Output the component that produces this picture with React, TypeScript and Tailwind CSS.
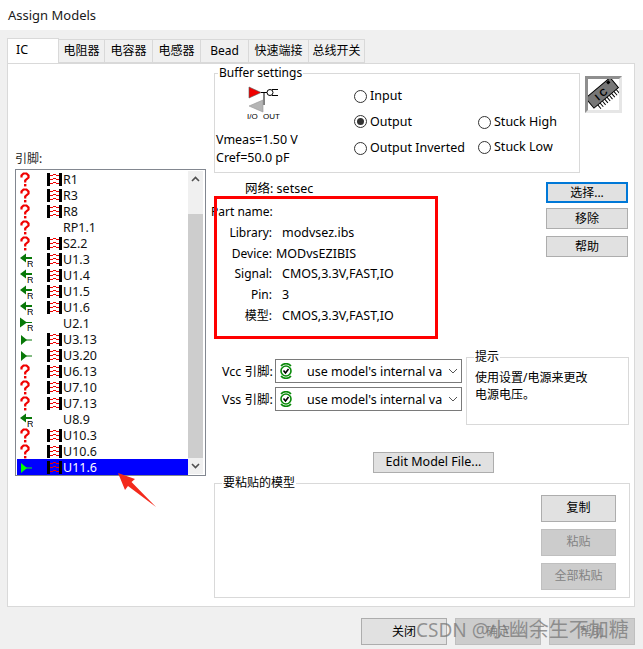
import React from "react";

type PinIcon = "question" | "inputR" | "outputR" | "output";

const pins: { name: string; icon: PinIcon; model: boolean }[] = [
  { name: "R1", icon: "question", model: true },
  { name: "R3", icon: "question", model: true },
  { name: "R8", icon: "question", model: true },
  { name: "RP1.1", icon: "question", model: false },
  { name: "S2.2", icon: "question", model: true },
  { name: "U1.3", icon: "inputR", model: true },
  { name: "U1.4", icon: "inputR", model: true },
  { name: "U1.5", icon: "inputR", model: true },
  { name: "U1.6", icon: "inputR", model: true },
  { name: "U2.1", icon: "outputR", model: false },
  { name: "U3.13", icon: "output", model: true },
  { name: "U3.20", icon: "output", model: true },
  { name: "U6.13", icon: "question", model: true },
  { name: "U7.10", icon: "question", model: true },
  { name: "U7.13", icon: "question", model: true },
  { name: "U8.9", icon: "inputR", model: false },
  { name: "U10.3", icon: "question", model: true },
  { name: "U10.6", icon: "question", model: true },
  { name: "U11.6", icon: "output", model: true },
];

const tabs = ["电阻器", "电容器", "电感器", "Bead", "快速端接", "总线开关"];
const tabWidths = ["w-[47px]", "w-[49px]", "w-[49px]", "w-[49px]", "w-[61px]", "w-[57px]"];

const details = [
  { label: "Library:", value: "modvsez.ibs" },
  { label: "Device:", value: "MODvsEZIBIS", shift: true },
  { label: "Signal:", value: "CMOS,3.3V,FAST,IO" },
  { label: "Pin:", value: "3" },
  { label: "模型:", value: "CMOS,3.3V,FAST,IO" },
];

const StatusIcon = ({ icon, selected }: { icon: PinIcon; selected: boolean }) => {
  const green = selected ? "#00ff00" : "#087808";
  if (icon === "question") {
    return (
      <svg width="14" height="16" viewBox="0 0 14 16">
        <path d="M2.5 5.5 V3.5 L4.5 1.5 H7.5 L9.5 3.5 V5.5 L6.2 8.5 V10.5" fill="none" stroke="#f00000" strokeWidth="2.2" />
        <rect x="5" y="12" width="2.4" height="2.4" fill="#f00000" />
      </svg>
    );
  }
  if (icon === "output") {
    return (
      <svg width="14" height="16" viewBox="0 0 14 16">
        <path d="M2 3 L8 8 L2 13 Z" fill={green} />
        <path d="M7 8 H13" stroke={green} strokeWidth="1" />
      </svg>
    );
  }
  if (icon === "outputR") {
    return (
      <svg width="14" height="16" viewBox="0 0 14 16">
        <path d="M1 1.5 L8 6.5 L1 11.5 Z" fill={green} />
        <path d="M7 6.5 H13" stroke={green} strokeWidth="1" />
        <text x="8" y="15" fontSize="9" fill="#000" fontFamily="Liberation Sans, sans-serif">R</text>
      </svg>
    );
  }
  return (
    <svg width="14" height="16" viewBox="0 0 14 16">
      <path d="M1 6 L7 1.5 V10.5 Z" fill={green} />
      <path d="M6 6 H13" stroke={green} strokeWidth="2" />
      <text x="8" y="15" fontSize="9" fill="#000" fontFamily="Liberation Sans, sans-serif">R</text>
    </svg>
  );
};

const ModelIcon = () => (
  <svg width="16" height="16" viewBox="0 0 16 16" shapeRendering="crispEdges">
    <rect x="0" y="1" width="3" height="13" fill="#000" />
    <rect x="12" y="1" width="3" height="13" fill="#000" />
    <path
      d="M3 3.5 H6 M9 3.5 H12 M6 2.5 H9 M3 7.5 H6 M9 7.5 H12 M6 6.5 H9 M3 11.5 H6 M9 11.5 H12 M6 10.5 H9"
      fill="none"
      stroke="#f00000"
      strokeWidth="1"
    />
  </svg>
);

const Radio = ({ label, checked, className }: { label: string; checked?: boolean; className?: string }) => (
  <div className={`flex items-center gap-[3px] ${className ?? ""}`}>
    <span className="w-[13px] h-[13px] rounded-full border border-[#333] bg-white flex items-center justify-center">
      {checked && <span className="w-[7px] h-[7px] rounded-full bg-[#333]" />}
    </span>
    <span>{label}</span>
  </div>
);

const Btn = ({ children, className, disabled }: { children: React.ReactNode; className?: string; disabled?: boolean }) => (
  <div
    className={`flex items-center justify-center text-[12px] ${
      disabled ? "bg-[#cccccc] text-[#838383]" : "bg-[#e1e1e1] text-black"
    } ${className ?? ""}`}
  >
    {children}
  </div>
);

const Legend = ({ children, className }: { children: React.ReactNode; className?: string }) => (
  <span className={`absolute -top-[9px] bg-white px-[1px] leading-[16px] text-[12px] ${className ?? ""}`}>{children}</span>
);

const BufferSymbol = () => (
  <svg width="36" height="36" viewBox="0 0 36 36">
    <path d="M3 2 L15 7.5 L3 13 Z" fill="#f00000" stroke="#555" strokeWidth="0.6" />
    <path d="M15 7.5 H21 M18 7.5 V20" stroke="#000" strokeWidth="1" fill="none" />
    <circle cx="24" cy="7.5" r="3" fill="#fff" stroke="#000" strokeWidth="1" />
    <path d="M26 4.5 H32 M26 10.5 H32" stroke="#000" strokeWidth="1" />
    <path d="M3 21 L17 15 V27 Z" fill="#b5b5b5" stroke="#999" strokeWidth="0.6" />
    <text x="1" y="33.5" fontSize="8" fill="#000" fontFamily="Liberation Sans, sans-serif">I/O</text>
    <text x="17" y="33.5" fontSize="8" fill="#000" fontFamily="Liberation Sans, sans-serif">OUT</text>
  </svg>
);

const ChipIcon = () => (
  <div className="w-[37px] h-[37px] border-[3px] border-t-[#8f8f8f] border-l-[#8f8f8f] border-r-[#e6e6e6] border-b-[#e6e6e6] bg-white">
    <svg width="31" height="31" viewBox="0 0 31 31">
      <g transform="rotate(-40 15 15)">
        <path
          d="M4 20 V25 M7 20 V25 M10 20 V25 M13 20 V25 M16 20 V25 M19 20 V25 M22 20 V25 M25 20 V25 M28 20 V25"
          stroke="#000"
          strokeWidth="1"
        />
        <rect x="-1" y="7" width="32" height="13" fill="#777" stroke="#000" strokeWidth="1" />
        <text x="7" y="17.5" fontSize="10" fontWeight="bold" fill="#000" fontFamily="Liberation Sans, sans-serif">I C</text>
        <rect x="25" y="8" width="3" height="3" fill="#000" />
      </g>
    </svg>
  </div>
);

const SupplyIcon = () => (
  <svg width="16" height="16" viewBox="0 0 16 16">
    <path d="M3 3 A6.5 6.5 0 0 1 13 3" fill="none" stroke="#0a8a0a" strokeWidth="1.6" />
    <path d="M3 13 A6.5 6.5 0 0 0 13 13" fill="none" stroke="#0a8a0a" strokeWidth="1.6" />
    <circle cx="8" cy="8" r="5" fill="#fff" stroke="#0a8a0a" strokeWidth="1.6" />
    <path d="M5.5 7.5 L7.5 10 L10.5 6" fill="none" stroke="#000" strokeWidth="1.6" />
  </svg>
);

const Combo = () => (
  <div className="w-[187px] h-[24px] border border-[#7a7a7a] bg-white flex items-center pl-[2px] pr-[3px]">
    <SupplyIcon />
    <span className="ml-[13px] flex-1 whitespace-nowrap translate-y-[1px]">use model's internal va</span>
    <svg width="10" height="6" viewBox="0 0 10 6" className="shrink-0">
      <path d="M1 1 L5 5 L9 1" fill="none" stroke="#555" strokeWidth="1" />
    </svg>
  </div>
);

const Scrollbar = () => (
  <div className="w-[15px] flex flex-col bg-[#f0f0f0]">
    <div className="h-[16px] flex items-center justify-center">
      <svg width="9" height="6" viewBox="0 0 9 6">
        <path d="M1 5 L4.5 1.5 L8 5" fill="none" stroke="#505050" strokeWidth="1.6" />
      </svg>
    </div>
    <div className="mt-[27px] flex-1 bg-[#cdcdcd]" />
    <div className="h-[16px] flex items-center justify-center">
      <svg width="9" height="6" viewBox="0 0 9 6">
        <path d="M1 1 L4.5 4.5 L8 1" fill="none" stroke="#505050" strokeWidth="1.6" />
      </svg>
    </div>
  </div>
);

export default function App() {
  return (
    <div
      className="relative w-[643px] h-[649px] overflow-hidden bg-[#f0f0f0] text-[12.5px] leading-[16px] text-black"
      style={{ fontFamily: '"Noto Sans", "Noto Sans CJK SC", sans-serif' }}
    >
      {/* Title bar */}
      <div className="h-[30px] bg-white flex items-center pl-[8px] text-[13px] text-[#1a1a1a]">Assign Models</div>

      {/* Tabs */}
      <div className="flex h-[24px] mt-[9px] pl-[7px] items-end">
        <div className="relative z-10 w-[52px] h-[25px] bg-white border border-b-0 border-[#d9d9d9] pl-[8px] pt-[3px]">IC</div>
        {tabs.map((tab, i) => (
          <div
            key={tab}
            className={`${tabWidths[i]} h-[24px] -ml-[1px] border border-[#d9d9d9] bg-[#f0f0f0] flex items-center justify-center text-[12px]`}
          >
            {tab}
          </div>
        ))}
      </div>

      {/* Panel */}
      <div className="ml-[7px] w-[628px] h-[544px] bg-white border border-[#d9d9d9] flex">
        {/* Pin list */}
        <div className="w-[206px] shrink-0 pl-[7px] pt-[87px]">
          <div className="h-[18px] text-[12px] text-[#222]">引脚:</div>
          <div className="w-[191px] h-[307px] border border-[#828790] pl-[1px] py-[1px] pr-[2px] flex">
            <div className="flex-1">
              {pins.map((pin, i) => {
                const selected = i === pins.length - 1;
                return (
                  <div
                    key={pin.name}
                    className={`h-[16px] flex items-center ${selected ? "bg-[#0000ff] text-white" : "text-[#111]"}`}
                  >
                    <span className="w-[30px] pl-[2px] shrink-0 translate-y-[1px]">
                      <StatusIcon icon={pin.icon} selected={selected} />
                    </span>
                    <span className="w-[15px] shrink-0 translate-y-[1px]">{pin.model && <ModelIcon />}</span>
                    <span className="ml-[1px] translate-y-[1px]">{pin.name}</span>
                  </div>
                );
              })}
            </div>
            <Scrollbar />
          </div>
        </div>

        {/* Right side */}
        <div className="flex-1 pt-[9px]">
          <div className="flex items-start">
            <div className="relative w-[366px] h-[100px] border border-[#d9d9d9] shrink-0 flex">
              <Legend className="left-[3px]">Buffer settings</Legend>
              <div className="w-[139px] shrink-0 pl-[1px]">
                <div className="ml-[30px] mt-[11px] h-[36px]">
                  <BufferSymbol />
                </div>
                <div className="mt-[10px] leading-[18px]">
                  <div>Vmeas=1.50 V</div>
                  <div>Cref=50.0 pF</div>
                </div>
              </div>
              <div className="w-[124px] pt-[14px] flex flex-col gap-[9.5px]">
                <Radio label="Input" />
                <Radio label="Output" checked />
                <Radio label="Output Inverted" className="mt-[1px]" />
              </div>
              <div className="pt-[40px] flex flex-col gap-[9px]">
                <Radio label="Stuck High" />
                <Radio label="Stuck Low" />
              </div>
            </div>
            <div className="ml-[5px] mt-[3px]">
              <ChipIcon />
            </div>
          </div>

          <div className="flex mt-[8px]">
            <div className="w-[332px] shrink-0">
              <div className="ml-[31px] h-[15px]">网络: setsec</div>
              <div className="mt-[8px] -ml-[3px] text-[12px]">Part name:</div>
              <div className="mt-[5px] grid grid-cols-[58px_1fr] gap-x-[10px] gap-y-[4.7px]">
                {details.map((row) => (
                  <React.Fragment key={row.label}>
                    <div className="text-right text-[12px]">{row.label}</div>
                    <div className={`whitespace-nowrap ${row.shift ? "-ml-[6px]" : ""}`}>{row.value}</div>
                  </React.Fragment>
                ))}
              </div>
            </div>
            <div className="flex flex-col mt-[1px]">
              <Btn className="w-[82px] h-[21px] border-2 border-[#0078d7]">选择...</Btn>
              <Btn className="w-[82px] h-[21px] mt-[5px] border border-[#adadad]">移除</Btn>
              <Btn className="w-[82px] h-[21px] mt-[7px] border border-[#adadad]">帮助</Btn>
            </div>
          </div>

          <div className="flex mt-[33px]">
            <div className="w-[248px] shrink-0 pt-[2px]">
              <div className="flex items-center gap-[1px] pl-[8px]">
                <span className="w-[52px] whitespace-nowrap translate-y-[1px]">Vcc 引脚:</span>
                <Combo />
              </div>
              <div className="flex items-center gap-[1px] pl-[8px] mt-[4px]">
                <span className="w-[52px] whitespace-nowrap translate-y-[1px]">Vss 引脚:</span>
                <Combo />
              </div>
            </div>
            <div className="relative ml-[4px] w-[163px] h-[68px] border border-[#d9d9d9] pl-[8px] pt-[11px] leading-[17px] text-[12px]">
              <Legend className="left-[7px]">提示</Legend>
              <div>使用设置/电源来更改</div>
              <div>电源电压。</div>
            </div>
          </div>

          <div className="mt-[27px] flex">
            <Btn className="ml-[159px] w-[121px] h-[21px] border border-[#adadad]">
              <span className="text-[12.5px]">Edit Model File...</span>
            </Btn>
          </div>

          <div className="relative mt-[10px] w-[416px] h-[115px] border border-[#d9d9d9] flex flex-col items-end pt-[11px] pr-[13px] gap-[7px]">
            <Legend className="left-[7px]">要粘贴的模型</Legend>
            <Btn className="w-[75px] h-[27px] border border-[#adadad]">复制</Btn>
            <Btn className="w-[75px] h-[27px] border border-[#bfbfbf]" disabled>
              粘贴
            </Btn>
            <Btn className="w-[75px] h-[27px] border border-[#bfbfbf]" disabled>
              全部粘贴
            </Btn>
          </div>
        </div>
      </div>

      {/* Footer buttons */}
      <div className="flex mt-[11px] pl-[361px] gap-[8px]">
        <Btn className="w-[86px] h-[27px] border border-[#adadad]">关闭</Btn>
        <Btn className="w-[86px] h-[27px] border border-[#bfbfbf]" disabled>
          确定
        </Btn>
        <Btn className="w-[86px] h-[27px] border border-[#bfbfbf]" disabled>
          帮助
        </Btn>
      </div>

      {/* Red annotation box */}
      <div className="absolute left-[214px] top-[196px] w-[224px] h-[143px] border-[3px] border-[#ff0000]" />

      {/* Red annotation arrow */}
      <svg className="absolute left-[115px] top-[470px]" width="45" height="40" viewBox="0 0 45 40">
        <path d="M3 3 L20 9 L16.5 12 L41 37 L13 16 L10 20 Z" fill="#f32a1c" />
      </svg>

      {/* Watermark */}
      <div className="absolute left-[416px] top-[617px] text-[19px] leading-[26px] text-[#777]/75 whitespace-nowrap">
        CSDN @<span className="text-[20px]">小幽余生不加糖</span>
      </div>
    </div>
  );
}
